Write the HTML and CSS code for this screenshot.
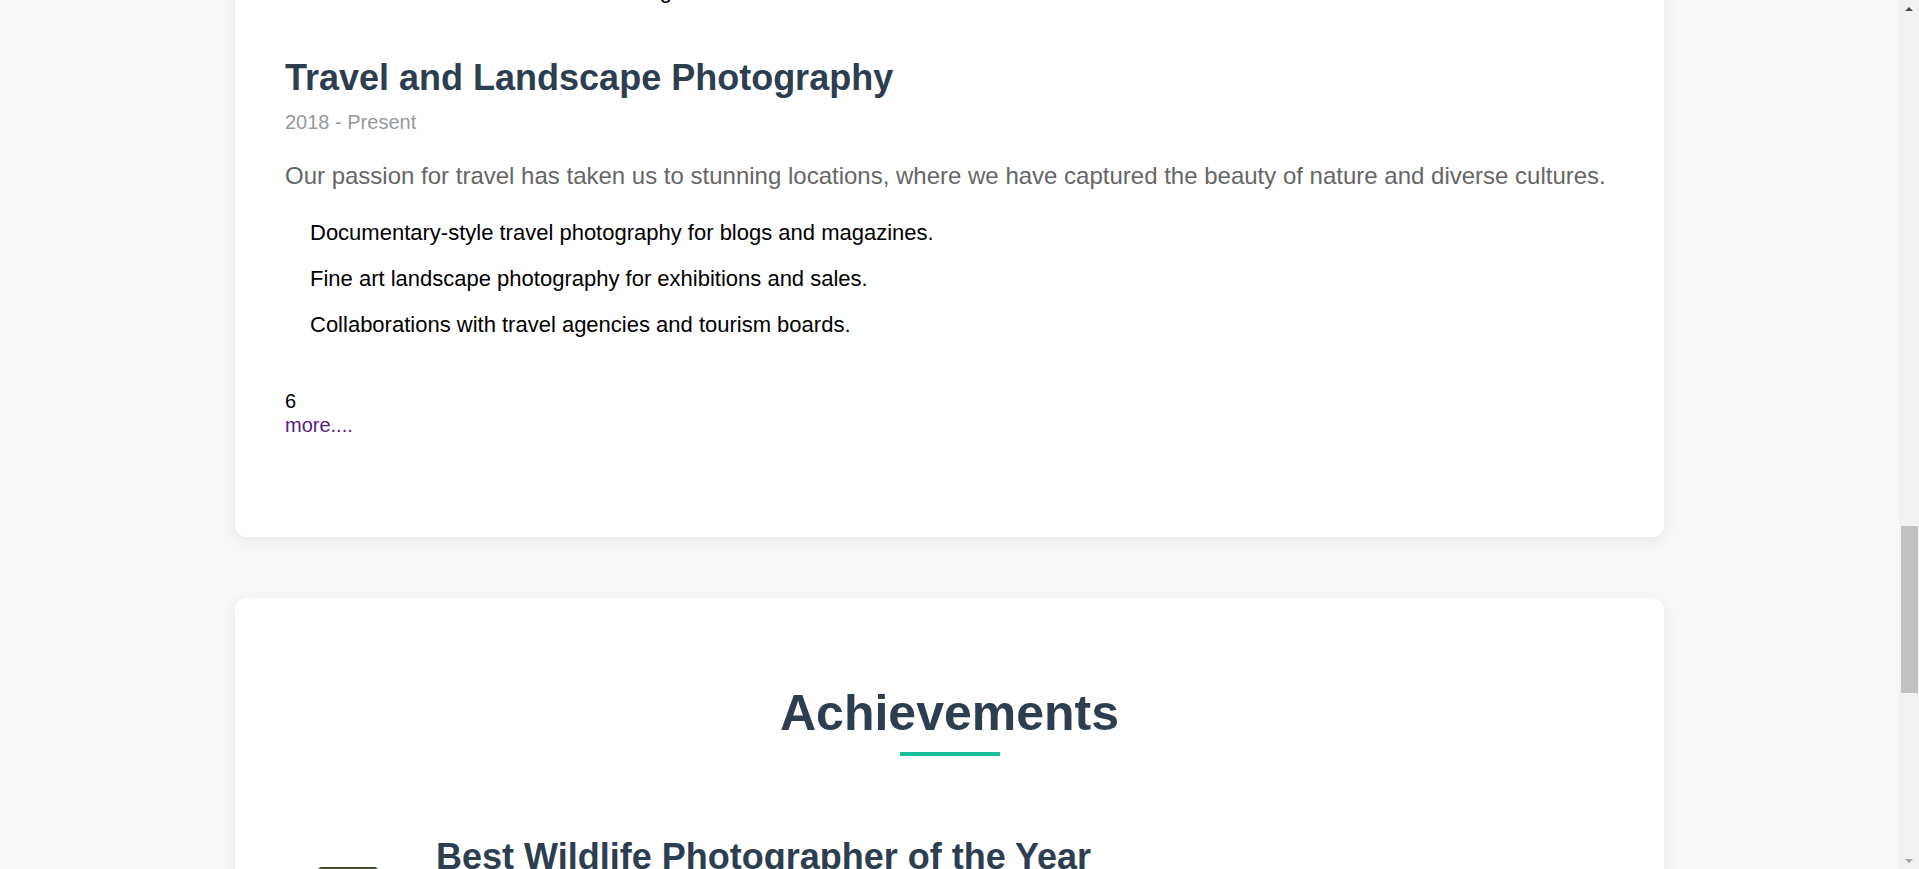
FILE: index.html
```html
<!DOCTYPE html>
<html lang="en">
<head>
<meta charset="utf-8">
<title>Experience &amp; Achievements</title>
<link rel="stylesheet" href="styles.css">
</head>
<body>
<main class="container">
  <section class="card experience">
    <div class="exp-item exp-prev">
      <ul class="duties">
        <li>Commercial and outdoor shoots for global brands.</li>
      </ul>
    </div>
    <div class="exp-item">
      <h3 class="exp-title">Travel and Landscape Photography</h3>
      <p class="exp-date">2018 - Present</p>
      <p class="exp-desc">Our passion for travel has taken us to stunning locations, where we have captured the beauty of nature and diverse cultures.</p>
      <ul class="duties">
        <li>Documentary-style travel photography for blogs and magazines.</li>
        <li>Fine art landscape photography for exhibitions and sales.</li>
        <li>Collaborations with travel agencies and tourism boards.</li>
      </ul>
    </div>
    <div class="more-block">
      <div class="count">6</div>
      <a class="more-link" href="#">more....</a>
    </div>
  </section>

  <section class="card achievements">
    <h2 class="section-title">Achievements</h2>
    <div class="title-bar"></div>
    <div class="ach-item">
      <div class="ach-thumb"></div>
      <div class="ach-body">
        <h3 class="ach-title">Best Wildlife Photographer of the Year</h3>
        <p class="ach-meta">National Photography Awards, 2022</p>
        <p class="ach-desc">Recognized for an outstanding series capturing rare wildlife in their natural habitats.</p>
      </div>
    </div>
  </section>
</main>

<div class="fake-scrollbar" aria-hidden="true">
  <div class="sb-arrow sb-up"></div>
  <div class="sb-track"><div class="sb-thumb"></div></div>
  <div class="sb-arrow sb-down"></div>
</div>
</body>
</html>
```

FILE: styles.css
```css
html, body {
  margin: 0;
  padding: 0;
}

body {
  background: #f8f8f8;
  font-family: "Liberation Sans", Arial, Helvetica, sans-serif;
  color: #000;
  padding-right: 20px;
}

.container {
  width: 1429px;
  margin: 0 auto;
  padding-bottom: 200px;
}

.card {
  background: #fff;
  border-radius: 12px;
  box-shadow: 0 4px 16px rgba(0, 0, 0, 0.07);
  padding: 50px;
}

.experience {
  margin-top: -72px;
}

.exp-item {
  margin-bottom: 52px;
}

.exp-prev {
  margin-bottom: 54px;
}

.exp-title {
  margin: 0;
  font-size: 36px;
  font-weight: bold;
  color: #2c3e50;
}

.exp-date {
  margin: 12px 0 0;
  font-size: 20px;
  color: #95999c;
}

.exp-desc {
  margin: 28px 0 0;
  font-size: 24px;
  color: #666;
}

.duties {
  list-style: none;
  margin: 30px 0 0;
  padding: 0 0 0 25px;
}

.exp-prev .duties {
  margin-top: 0;
}

.duties li {
  font-size: 22px;
  line-height: 25px;
  margin-bottom: 21px;
}

.duties li:last-child {
  margin-bottom: 0;
}

.more-block {
  font-size: 20px;
  line-height: 24px;
  margin-bottom: 50px;
}

.more-link {
  color: #551a8b;
  text-decoration: none;
}

.achievements {
  margin-top: 61px;
}

.section-title {
  margin: 36px 0 0;
  text-align: center;
  font-size: 50px;
  font-weight: bold;
  color: #2c3e50;
}

.title-bar {
  width: 100px;
  height: 4px;
  background: #1abc9c;
  margin: 10px auto 0;
}

.ach-item {
  display: flex;
  align-items: flex-start;
  gap: 58px;
  margin-top: 80px;
  padding-left: 33px;
}

.ach-thumb {
  flex: 0 0 60px;
  height: 60px;
  margin-top: 31px;
  border-radius: 4px;
  background: linear-gradient(180deg, #3f4a2c 0%, #6f7f45 40%, #4c5a30 100%);
}

.ach-title {
  margin: 0;
  font-size: 36px;
  font-weight: bold;
  color: #2c3e50;
}

.ach-meta {
  margin: 12px 0 0;
  font-size: 20px;
  color: #95999c;
}

.ach-desc {
  margin: 20px 0 0;
  font-size: 22px;
  color: #666;
}

/* Static replica of the window scrollbar, drawn over the right edge */
.fake-scrollbar {
  position: fixed;
  top: 0;
  right: 0;
  bottom: 0;
  width: 20px;
  background: #f1f1f1;
  display: flex;
  flex-direction: column;
}

.sb-arrow {
  flex: 0 0 17px;
  position: relative;
}

.sb-up::after,
.sb-down::after {
  content: "";
  position: absolute;
  left: 50%;
  top: 50%;
  width: 0;
  height: 0;
  border-left: 4px solid transparent;
  border-right: 4px solid transparent;
  transform: translate(-50%, -50%);
}

.sb-up::after {
  border-bottom: 4px solid #505050;
}

.sb-down::after {
  border-top: 4px solid #a3a3a3;
}

.sb-track {
  flex: 1;
  position: relative;
}

.sb-thumb {
  position: absolute;
  top: 509px;
  left: 2px;
  right: 1px;
  height: 167px;
  background: #c1c1c1;
}
```
